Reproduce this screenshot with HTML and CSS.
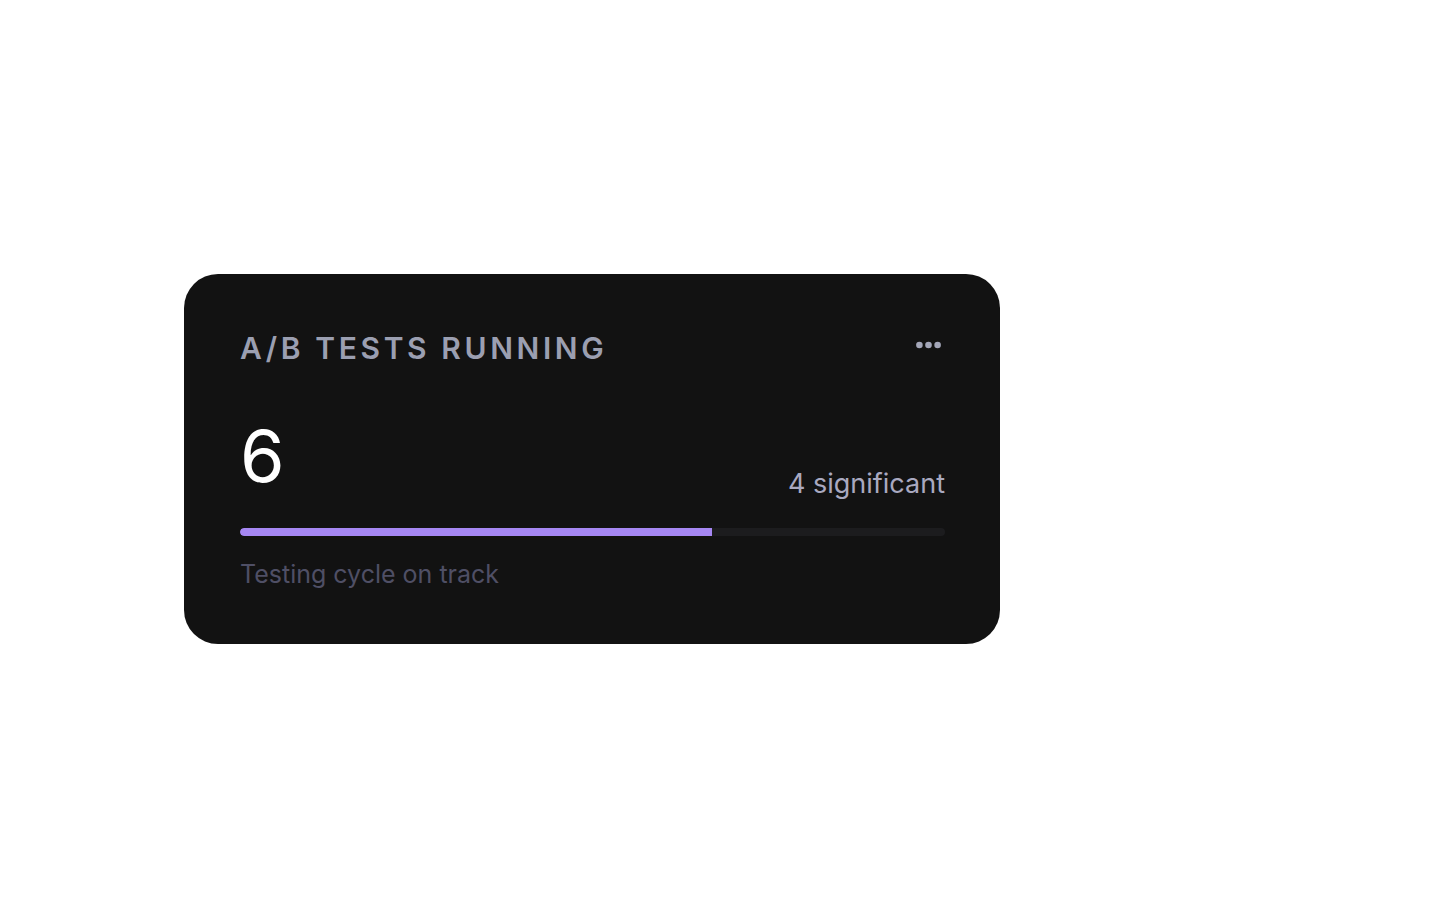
FILE: index.html
```html
<!DOCTYPE html>
<html lang="en">
<head>
  <meta charset="UTF-8" />
  <meta name="viewport" content="width=device-width, initial-scale=1.0"/>
  <title>A/B Tests Running</title>
  <link rel="stylesheet" href="styles.css">
</head>
<body>

  <div class="stat-card">
    <div class="stat-head">
      <div class="stat-title">A/B Tests Running</div>
      <button class="more-btn" title="More">
        <svg width="25" height="8" viewBox="0 0 25 8">
          <circle cx="3.4" cy="4" r="3.3" />
          <circle cx="12.5" cy="4" r="3.3" />
          <circle cx="21.6" cy="4" r="3.3" />
        </svg>
      </button>
    </div>

    <div class="stat-main">
      <div class="stat-value">6</div>
      <div class="stat-side">4 significant</div>
    </div>

    <div class="bar">
      <div class="bar-fill" style="width: 67%"></div>
    </div>

    <div class="stat-note">Testing cycle on track</div>
  </div>

</body>
</html>
```

FILE: styles.css
```css
body {
  margin: 0;
  background: #fff;
  font-family: 'Inter', 'Noto Sans', sans-serif;
  padding: 274px 0 0 184px;
}

.stat-card {
  background: #121212;
  border-radius: 34px;
  width: 816px;
  box-sizing: border-box;
  padding: 56px 55px 55px 56px;
}

.stat-head {
  display: flex;
  justify-content: space-between;
  align-items: flex-start;
}

.stat-title {
  font-size: 30px;
  font-weight: 600;
  text-transform: uppercase;
  letter-spacing: 0.12em;
  color: #9b9fb1;
}

.more-btn {
  background: none;
  border: none;
  padding: 0;
  margin: 11px 4px 0 0;
  cursor: pointer;
  display: flex;
}

.more-btn svg {
  fill: #a3a6b8;
}

.stat-main {
  display: flex;
  justify-content: space-between;
  align-items: flex-end;
  margin-top: 46px;
}

.stat-value {
  font-size: 72px;
  line-height: 88px;
  color: #fff;
}

.stat-side {
  font-size: 27px;
  line-height: 1;
  padding-bottom: 3px;
  color: #a9a9c0;
}

.bar {
  height: 8px;
  margin-top: 28px;
  background: #1c1c1e;
  border-radius: 4px;
  overflow: hidden;
}

.bar-fill {
  height: 100%;
  background: #a687f3;
  border-radius: 4px 0 0 4px;
}

.stat-note {
  margin-top: 23px;
  font-size: 25px;
  color: #4f4f65;
}
```
